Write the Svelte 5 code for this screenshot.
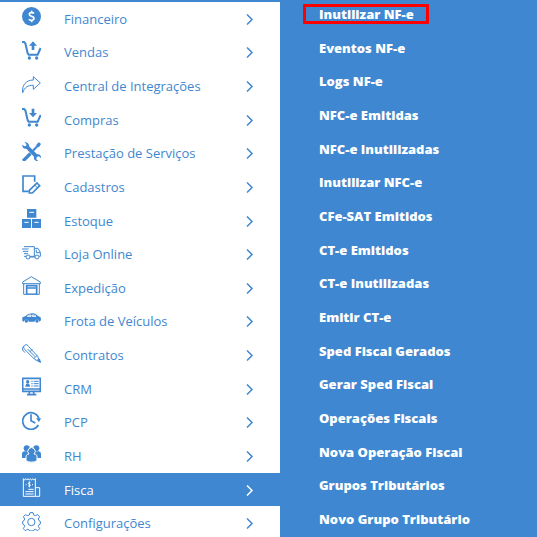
<script lang="ts">
	type Item = { label: string; icon: string }

	const menu: Item[] = [
		{ label: 'Financeiro', icon: 'coin' },
		{ label: 'Vendas', icon: 'cartUp' },
		{ label: 'Central de Integrações', icon: 'share' },
		{ label: 'Compras', icon: 'cartDown' },
		{ label: 'Prestação de Serviços', icon: 'tools' },
		{ label: 'Cadastros', icon: 'edit' },
		{ label: 'Estoque', icon: 'boxes' },
		{ label: 'Loja Online', icon: 'truck' },
		{ label: 'Expedição', icon: 'warehouse' },
		{ label: 'Frota de Veículos', icon: 'car' },
		{ label: 'Contratos', icon: 'pen' },
		{ label: 'CRM', icon: 'monitor' },
		{ label: 'PCP', icon: 'clock' },
		{ label: 'RH', icon: 'people' },
		{ label: 'Fisca', icon: 'receipt' },
		{ label: 'Configurações', icon: 'gear' }
	]

	const submenu = [
		'Inutilizar NF-e',
		'Eventos NF-e',
		'Logs NF-e',
		'NFC-e Emitidas',
		'NFC-e Inutilizadas',
		'Inutilizar NFC-e',
		'CFe-SAT Emitidos',
		'CT-e Emitidos',
		'CT-e Inutilizadas',
		'Emitir CT-e',
		'Sped Fiscal Gerados',
		'Gerar Sped Fiscal',
		'Operações Fiscais',
		'Nova Operação Fiscal',
		'Grupos Tributários',
		'Novo Grupo Tributário'
	]

	let active = $state('Fisca')
	let marked = $state('Inutilizar NF-e')
</script>

{#snippet glyph(name: string)}
	<svg class="icon" viewBox="0 0 57 57" aria-hidden="true">
		{#if name === 'coin'}
			<circle class="fill" cx="28.500" cy="28.500" r="28.500" />
			<path class="cut" d="M36 19c-3-3-14-4-14 3 0 8 14 4 14 12 0 7-12 7-15 3M29 11v6M29 39v7" />
		{:else if name === 'cartUp' || name === 'cartDown'}
			<path class="thick" d="M0 3h6l4 4 7 30 3 4h27l9-20" />
			<circle class="fill" cx="22" cy="51" r="5" />
			<circle class="fill" cx="44" cy="51" r="5" />
			{#if name === 'cartUp'}
				<path class="fill" d="M33 1 45 14h-8v13h-8V14h-8z" />
			{:else}
				<path class="fill" d="M33 28 45 15h-8V2h-8v13h-8z" />
			{/if}
		{:else if name === 'share'}
			<path class="line" d="M34 5 55 24 34 43V31C18 30 8 37 2 53-1 31 12 15 34 15z" />
		{:else if name === 'tools'}
			<path class="fill" d="M7 1c7-2 15 3 14 12l24 24c8-2 13 4 12 12l-6-6-7 2-1 7 6 5c-9 1-15-5-13-13L13 20C5 22 0 16 1 8l6 5 6-2V6z" />
			<path class="fill" d="m51 1 6 5-6 9-4 1-11 12-5-5 12-12 1-4zM22 31l7 7-19 19-7 0-3-4z" />
		{:else if name === 'edit'}
			<path class="mid" d="M20 49H3V3h35v17" />
			<path class="mid" d="m45 24 8 8-22 22h-9v-8z" />
			<path class="line" d="m38 30 8 8" />
		{:else if name === 'boxes'}
			<path class="fill" d="M15 0h28v26H15zM0 30h27v27H0zM30 30h27v27H30z" />
			<path class="cut slim" d="M22 10h14M7 40h13M37 40h13" />
		{:else if name === 'truck'}
			<path class="line" d="M6 11h31v29H24M37 16h11l7 12v12h-3M12 40H6M0 18h20M3 25h16M6 32h12M43 20v9h12" />
			<circle class="line" cx="18" cy="42" r="6" />
			<circle class="line" cx="45" cy="42" r="6" />
			<path class="line" d="M24 42h15" />
		{:else if name === 'warehouse'}
			<path class="line" d="M2 18 28 2l27 16v5H2zM5 23v32h47V23" />
			<path class="mid" d="M14 55V29h30v26M14 36h30" />
			<path class="line" d="M14 54h30" />
		{:else if name === 'car'}
			<path class="fill" d="M1 22 10 19c6-6 12-9 22-9 7 0 12 4 16 8l8 4 1 9-5 4c-1-9-13-9-14 0H20c-1-9-13-9-14 0l-5-2z" />
			<path class="cut slim" d="M16 19c4-4 8-4 11-4v4zM31 15c6 0 8 1 11 4H31z" />
			<circle class="fill" cx="13" cy="33" r="5" />
			<circle class="fill" cx="45" cy="33" r="5" />
		{:else if name === 'pen'}
			<path class="line" d="M9 3c5-3 8 1 11 5l27 29 8 18-17-9L10 18C4 12 3 8 9 3zM24 23l7-7M36 43l10-9M6 6 2 11v7l7 8" />
			<path class="line" d="m17 15 22 23" />
			<path class="fill" d="m44 47 13 10-3-13z" />
		{:else if name === 'monitor'}
			<path class="mid" d="M2 4h53v39H2zM2 36h53M22 43v9M35 43v9M15 53h28" />
			<circle class="fill" cx="17" cy="14" r="5" />
			<path class="fill" d="M10 29c0-14 14-14 14 0z" />
			<path class="line" d="M28 13h4M35 13h15M28 20h4M35 20h15M28 27h4M35 27h15" />
		{:else if name === 'clock'}
			<path class="mid" d="M49 42A25 25 0 1 1 51 23" />
			<path class="mid" d="M27 10v19l13 7" />
			<path class="fill" d="M42 22h15l-6 11z" />
		{:else if name === 'people'}
			<circle class="fill" cx="14" cy="13" r="9" />
			<circle class="fill" cx="43" cy="13" r="9" />
			<path class="fill" d="M0 42V31c0-6 3-9 8-9h14v20zM57 42V31c0-6-3-9-8-9H35v20z" />
			<path class="person" d="M12 50V39c0-6 4-9 9-9a11 11 0 1 1 15 0c6 0 9 3 9 9v11c-9 6-24 6-33 0z" />
		{:else if name === 'receipt'}
			<path class="line" d="M4 2c3 5 5 5 7 0 3 5 5 5 7 0 3 5 5 5 7 0 3 5 5 5 7 0 3 5 5 5 8 0v53H4zM40 29h13v26H40" />
			<path class="line" d="M25 14c-6-2-8 4-3 5s4 7-3 5M22 10v18M11 20h3M30 20h3M19 34h16M10 41h25M10 48h25" />
		{:else if name === 'gear'}
			<path
				class="line"
				d="M24 2h9l2 7 5 2 7-3 6 6-4 7 2 5 4 2v8l-4 2-2 5 4 7-6 6-7-4-5 2-2 3h-9l-2-3-5-2-7 4-6-6 4-7-2-5-4-2v-8l4-2 2-5-4-7 6-6 7 3 5-2z"
			/>
			<circle class="line" cx="28" cy="30" r="11" />
		{/if}
	</svg>
{/snippet}

<div class="page">
	<nav class="main" aria-label="Menu principal">
		<ul>
			{#each menu as item}
				<li>
					<button class:active={active === item.label} onclick={() => (active = item.label)}>
						{@render glyph(item.icon)}
						<span>{item.label}</span>
						<svg class="chevron" viewBox="0 0 16 24" aria-hidden="true">
							<path d="m2 3 10 10-10 10" />
						</svg>
					</button>
				</li>
			{/each}
		</ul>
	</nav>
	<nav class="sub" aria-label={active}>
		<ul>
			{#each submenu as label}
				<li>
					<a href="#top" class:marked={marked === label} onclick={() => (marked = label)}>{label}</a>
				</li>
			{/each}
		</ul>
	</nav>
</div>

<style>
	:global(body) {
		overflow-x: hidden;
		background: #fff;
	}
	:global(html) {
		scrollbar-width: none;
	}
	.page {
		--blue: #3f87d0;
		display: flex;
		min-height: 100vh;
		font-family: 'Open Sans', sans-serif;
		font-size: 13px;
		line-height: 18px;
	}
	ul {
		display: grid;
		grid-auto-rows: 1fr;
		margin: 0;
		padding: 0;
		list-style: none;
	}
	li {
		display: flex;
		align-items: center;
	}
	.main {
		flex: 0 0 280px;
		border-top: 2px solid var(--blue);
		box-sizing: border-box;
		color: var(--blue);
	}
	.main ul {
		min-height: calc(100vh + 1px);
	}
	.sub {
		flex: 1;
		background: var(--blue);
	}
	.sub ul {
		min-height: calc(100vh + 2px);
		margin-top: -3px;
	}
	button {
		display: flex;
		align-items: center;
		align-self: stretch;
		width: 100%;
		padding: 0 26px 0 22px;
		border: 0;
		background: none;
		color: inherit;
		font: inherit;
		text-align: left;
		cursor: pointer;
	}
	button.active {
		background: var(--blue);
		color: #fff;
	}
	button span {
		flex: 1;
	}
	.icon {
		width: 19px;
		height: 19px;
		margin: 0 23px 4px 0;
		fill: none;
		stroke: none;
	}
	.fill {
		fill: currentColor;
	}
	.line,
	.mid,
	.thick {
		stroke: currentColor;
		stroke-width: 3;
	}
	.mid {
		stroke-width: 5;
	}
	.thick {
		stroke-width: 6;
	}
	.cut {
		stroke: #fff;
		stroke-width: 5;
	}
	.slim {
		stroke-width: 3;
	}
	.person {
		fill: currentColor;
		stroke: #fff;
		stroke-width: 3;
	}
	.chevron {
		width: 8px;
		height: 12px;
		fill: none;
		stroke: currentColor;
		stroke-width: 3;
	}
	a {
		margin-left: 23px;
		padding: 0 12px 0 13px;
		border: 3px solid transparent;
		color: #fff;
		font-weight: 800;
		line-height: 14px;
		text-decoration: none;
	}
	a.marked {
		border-color: #f00;
		border-radius: 1px;
	}
</style>
